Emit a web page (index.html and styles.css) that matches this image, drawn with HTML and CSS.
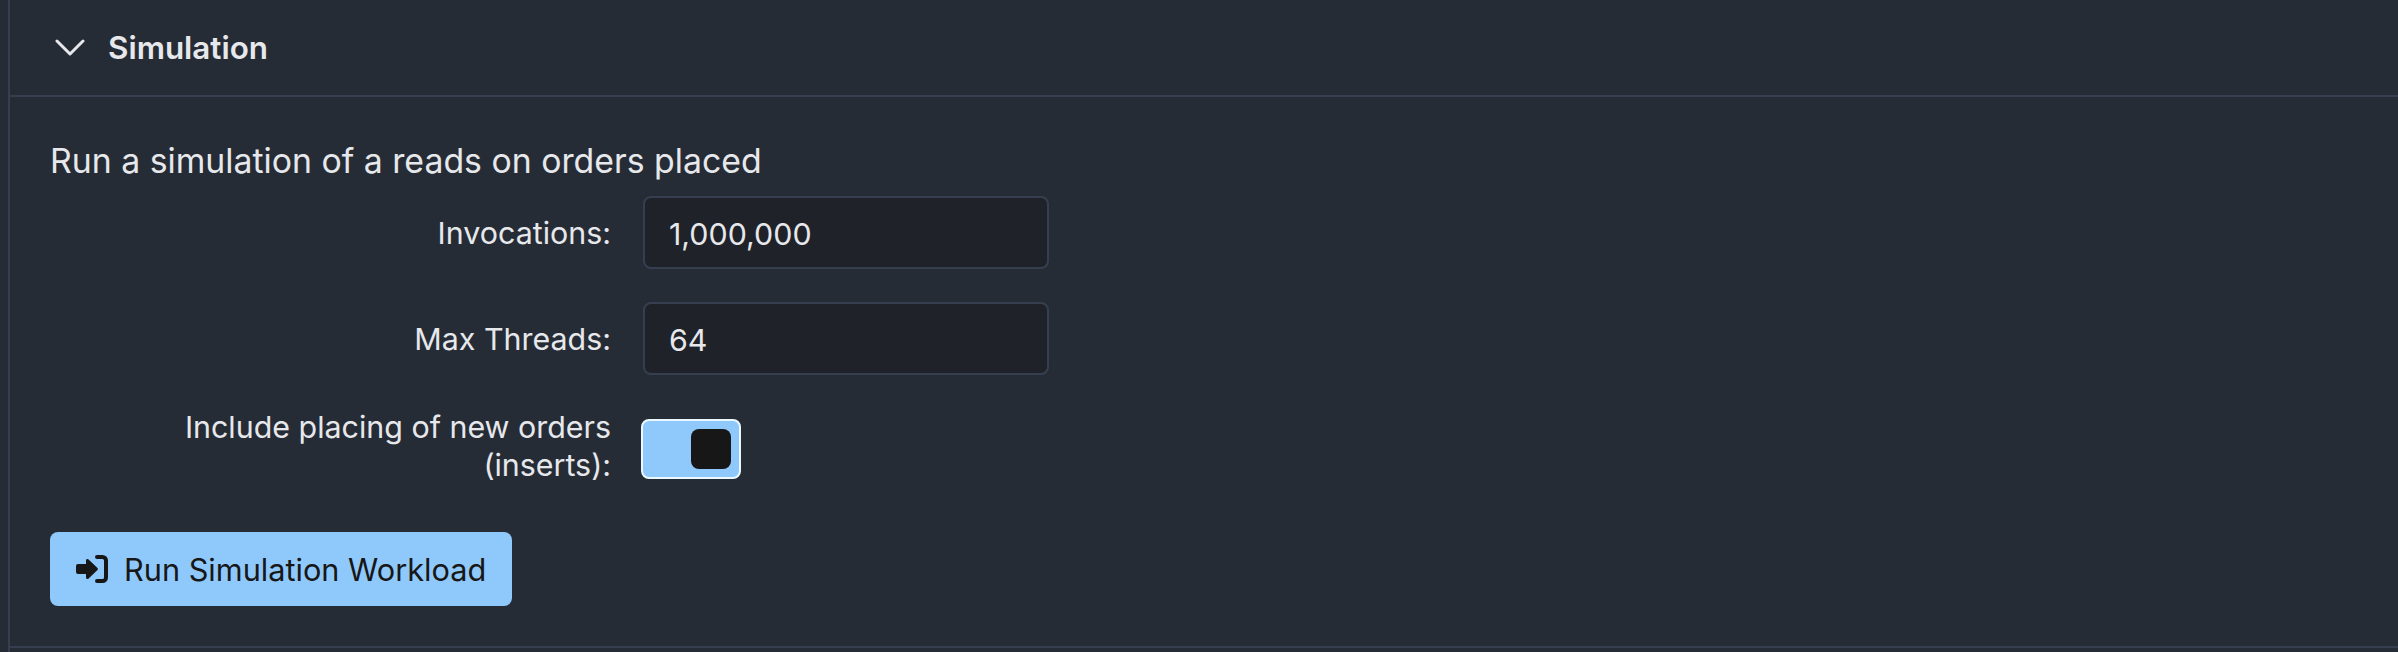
FILE: index.html
```html
<!DOCTYPE html>
<html lang="en">
<head>
    <meta charset="UTF-8">
    <meta name="viewport" content="width=device-width, initial-scale=1.0">
    <title>Simulation</title>
    <link rel="stylesheet" href="styles.css">
</head>

<body>
    <section class="panel">
        <div class="panel-header">
            <svg class="chevron" viewBox="0 0 30 20" width="30" height="20">
                <path d="M2 3 L15 16 L28 3" fill="none" stroke="#e6e8eb" stroke-width="3" stroke-linecap="round" stroke-linejoin="round"/>
            </svg>
            <h2 class="panel-title">Simulation</h2>
        </div>
        <div class="panel-body">
            <p class="intro">Run a simulation of a reads on orders placed</p>
            <div class="form-row">
                <label class="form-label">Invocations:</label>
                <input class="form-input" type="text" value="1,000,000">
            </div>
            <div class="form-row">
                <label class="form-label">Max Threads:</label>
                <input class="form-input" type="text" value="64">
            </div>
            <div class="form-row form-row-switch">
                <label class="form-label">Include placing of new orders (inserts):</label>
                <span class="switch"><span class="switch-thumb"></span></span>
            </div>
            <button class="run-button" type="button">
                <svg class="run-icon" viewBox="0 0 32 28" width="32" height="28">
                    <path d="M0 11 a2 2 0 0 1 2 -2 H10 V5.500 a1.500 1.500 0 0 1 2.600 -1 L21.500 13 a1.500 1.500 0 0 1 0 2 L12.600 23.500 a1.500 1.500 0 0 1 -2.600 -1 V19 H2 a2 2 0 0 1 -2 -2 Z" fill="#171717"/>
                    <path d="M21 2 H26.500 A3.500 3.500 0 0 1 30 5.500 V22.500 A3.500 3.500 0 0 1 26.500 26 H21" fill="none" stroke="#171717" stroke-width="4" stroke-linecap="round"/>
                </svg>
                Run Simulation Workload
            </button>
        </div>
    </section>
</body>
</html>
```

FILE: styles.css
```css
* {
    margin: 0;
    padding: 0;
    box-sizing: border-box;
}
html, body {
    height: 100%;
    background: #262c36;
}
body {
    font-family: Inter, "Liberation Sans", sans-serif;
    color: #e6e8eb;
    padding-left: 8px;
}
.panel {
    border-left: 2px solid #363f4f;
    height: 100%;
}
.panel-header {
    display: flex;
    align-items: center;
    height: 97px;
    padding-left: 45px;
    border-bottom: 2px solid #363f4f;
}
.chevron {
    margin-right: 23px;
}
.panel-title {
    font-size: 31.400px;
    font-weight: 600;
}
.panel-body {
    height: 551px;
    padding: 42px 0 0 40px;
    border-bottom: 2px solid #363f4f;
}
.intro {
    font-size: 33.800px;
    line-height: 44px;
    margin-bottom: 13px;
}
.form-row {
    display: grid;
    grid-template-columns: 470px 406px;
    column-gap: 32px;
    align-items: center;
    margin-left: 91px;
    margin-bottom: 33px;
}
.form-row-switch {
    margin-bottom: 48px;
}
.form-label {
    font-size: 30.400px;
    line-height: 38px;
    text-align: right;
}
.form-input {
    height: 73px;
    padding: 2px 24px 0;
    font: inherit;
    font-size: 30.400px;
    color: #e6e8eb;
    background: #1f2229;
    border: 2px solid #363f4f;
    border-radius: 8px;
}
.switch {
    display: flex;
    justify-content: flex-end;
    align-items: center;
    width: 100px;
    height: 60px;
    margin: 6px 0 0 -2px;
    padding-right: 8px;
    background: #8fc9fb;
    border: 2px solid #ebf8ff;
    border-radius: 8px;
}
.switch-thumb {
    width: 40px;
    height: 40px;
    background: #171717;
    border-radius: 8px;
}
.run-button {
    display: flex;
    align-items: center;
    gap: 16px;
    width: 462px;
    height: 74px;
    padding-left: 26px;
    font: inherit;
    font-size: 30.700px;
    color: #171717;
    background: #8fc9fb;
    border: 0;
    border-radius: 8px;
}
```
